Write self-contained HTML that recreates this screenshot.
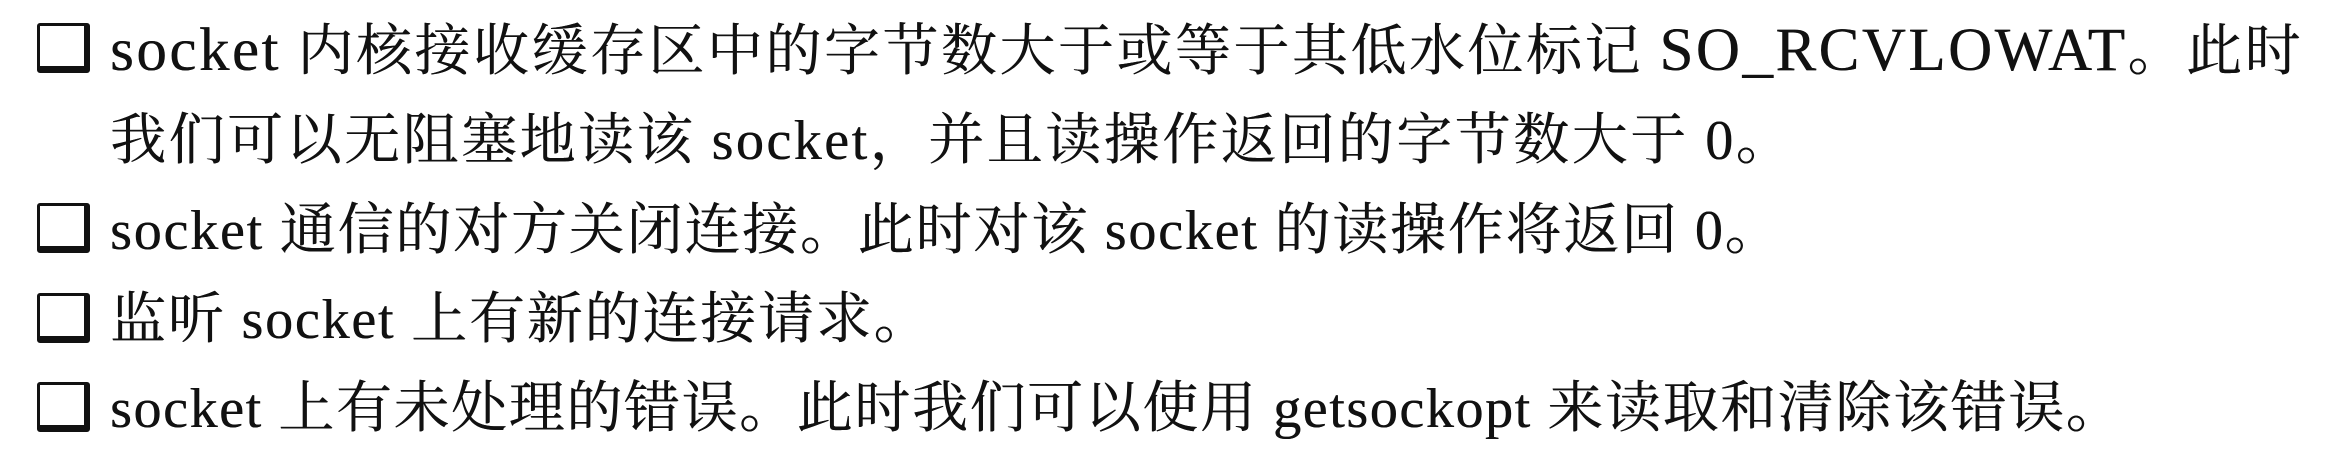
<!DOCTYPE html>
<html><head><meta charset="utf-8"><style>
html,body{margin:0;padding:0;background:#fff;width:2337px;height:471px;overflow:hidden}
.t{position:absolute;left:110px;font-family:"Liberation Serif","Noto Serif CJK SC",serif;font-size:56px;letter-spacing:1.8px;color:#111;white-space:nowrap;line-height:90px;text-shadow:0.4px 0 0 #111;}
.cb{position:absolute;left:37px;width:44px;height:40px;border:3px solid #111;border-right-width:6px;border-bottom-width:7px;border-radius:3px;box-sizing:content-box}
.l{font-size:61px}
</style></head><body>
<div class="cb" style="top:23px"></div>
<div class="t" style="top:6px;letter-spacing:2.5px"><span class="l">socket</span> 内核接收缓存区中的字节数大于或等于其低水位标记 <span class="l">SO_RCVLOWAT</span>。此时</div>
<div class="t" style="top:96px;letter-spacing:2.5px">我们可以无阻塞地读该 socket，并且读操作返回的字节数大于 0。</div>
<div class="cb" style="top:203px"></div>
<div class="t" style="top:186px">socket 通信的对方关闭连接。此时对该 socket 的读操作将返回 0。</div>
<div class="cb" style="top:293px"></div>
<div class="t" style="top:275px">监听 socket 上有新的连接请求。</div>
<div class="cb" style="top:382px"></div>
<div class="t" style="top:364px;letter-spacing:1.6px">socket 上有未处理的错误。此时我们可以使用 getsockopt 来读取和清除该错误。</div>
</body></html>
